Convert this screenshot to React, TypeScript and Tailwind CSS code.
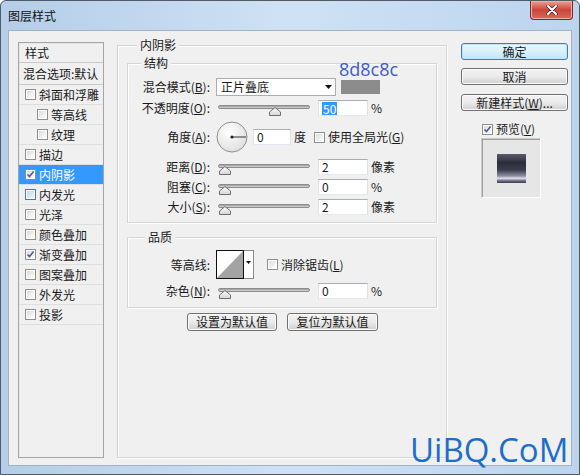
import type { ReactNode } from 'react';

const font = "font-['Noto_Sans_CJK_SC','Noto_Sans',sans-serif]";

function CheckBox({ checked = false, hot = false }: { checked?: boolean; hot?: boolean }) {
  return (
    <svg width="11" height="11" viewBox="0 0 11 11" className="shrink-0">
      <defs>
        <linearGradient id="cbg" x1="0" y1="0" x2="1" y2="1">
          <stop offset="0" stopColor="#dcdcdc" />
          <stop offset="1" stopColor="#ffffff" />
        </linearGradient>
        <linearGradient id="cbh" x1="0" y1="0" x2="1" y2="1">
          <stop offset="0" stopColor="#b9dcf5" />
          <stop offset="1" stopColor="#e8f5fd" />
        </linearGradient>
      </defs>
      <rect x="0.5" y="0.5" width="10" height="10" fill="#fff" stroke={hot ? '#3c7fb1' : '#8e8f8f'} />
      <rect x="2" y="2" width="7" height="7" fill={hot ? 'url(#cbh)' : 'url(#cbg)'} />
      {checked && <path d="M2.5 5.5 L4.5 7.6 L8.6 2.6" fill="none" stroke="#4a5f97" strokeWidth="1.6" />}
    </svg>
  );
}

function ListRow({
  children,
  indent = false,
  checked = false,
  selected = false,
  hot = false,
}: {
  children: ReactNode;
  indent?: boolean;
  checked?: boolean;
  selected?: boolean;
  hot?: boolean;
}) {
  return (
    <div
      className={`flex h-[20px] items-center gap-[3px] border-b border-[#dedede] ${indent ? 'pl-[18px]' : 'pl-[6px]'} ${
        selected ? 'bg-[#3399ff] text-white' : ''
      }`}
    >
      <CheckBox checked={checked} hot={hot} />
      <span>{children}</span>
    </div>
  );
}

function WinButton({ children, primary = false, className = '' }: { children: ReactNode; primary?: boolean; className?: string }) {
  return (
    <div
      className={`flex h-[17px] items-center justify-center rounded-[3px] border leading-none ${
        primary
          ? 'border-[#3c7fb1] bg-gradient-to-b from-[#eaf6fd] via-[#d9f0fc] to-[#bee6fd] shadow-[inset_0_0_0_1px_#bfe3f8]'
          : 'border-[#707070] bg-gradient-to-b from-[#f2f2f2] via-[#ebebeb] to-[#cfcfcf] shadow-[inset_0_0_0_1px_#fcfcfc]'
      } ${className}`}
    >
      {children}
    </div>
  );
}

function Label({ children }: { children: ReactNode }) {
  return <div className="w-[82px] shrink-0 whitespace-nowrap text-right">{children}</div>;
}

function Slider({ pos }: { pos: number }) {
  return (
    <div className="relative ml-[2px] h-[16px] w-[92px] shrink-0">
      <div className="absolute left-0 right-0 top-[5px] h-[4px] rounded-[2px] border border-[#8c8c8c] bg-gradient-to-b from-[#9a9a9a] to-[#d8d8d8]" />
      <svg width="12" height="9" viewBox="0 0 12 9" className="absolute top-[7px]" style={{ left: pos - 6 }}>
        <defs>
          <linearGradient id="thumb" x1="0" y1="0" x2="0" y2="1">
            <stop offset="0" stopColor="#ffffff" />
            <stop offset="1" stopColor="#d4d4d4" />
          </linearGradient>
        </defs>
        <path d="M6 0.5 L11.5 5 L11.5 8.5 L0.5 8.5 L0.5 5 Z" fill="url(#thumb)" stroke="#6e6e6e" />
      </svg>
    </div>
  );
}

function TextBox({ children, className = 'w-[50px]' }: { children: ReactNode; className?: string }) {
  return (
    <div className={`flex h-[16px] shrink-0 items-center border border-[#abadb3] border-b-[#e3e9ef] border-l-[#e2e3ea] border-r-[#dbdfe6] bg-white pl-[3px] ${className}`}>
      {children}
    </div>
  );
}

function Group({ title, titleLeft, className, children }: { title: string; titleLeft: number; className: string; children: ReactNode }) {
  return (
    <div className={`relative border border-[#d5d5d5] shadow-[1px_1px_0_#ffffff,inset_1px_1px_0_#ffffff] ${className}`}>
      <span className="absolute top-[-9px] bg-[#f0f0f0] px-[3px] leading-[16px]" style={{ left: titleLeft }}>
        {title}
      </span>
      {children}
    </div>
  );
}

function SliderRow({ label, pos, value, unit }: { label: ReactNode; pos: number; value: string; unit: string }) {
  return (
    <div className="flex h-[20px] items-center">
      <Label>{label}</Label>
      <div className="ml-[6px] flex items-center">
        <Slider pos={pos} />
        <TextBox className="ml-[8px] w-[50px]">{value}</TextBox>
        <span className="ml-[3px]">{unit}</span>
      </div>
    </div>
  );
}

export default function App() {
  return (
    <div className={`h-[475px] w-[580px] overflow-hidden bg-white text-[12px] text-[#1a1a1a] ${font}`}>
      <div className="relative flex h-full w-full flex-col rounded-t-[6px] border border-[#4f5b68] bg-gradient-to-r from-[#b5cde8] via-[#cfe2f5] to-[#bcd4ee]">
        {/* title bar */}
        <div className="flex h-[29px] shrink-0 items-center pl-[7px] text-[12px] text-[#111]">图层样式</div>
        <div className="absolute right-[6px] top-0 flex h-[19px] w-[43px] items-center justify-center rounded-b-[4px] border border-t-0 border-[#7a2a22] bg-gradient-to-b from-[#e8a093] via-[#c9463a] to-[#d86a5c] shadow-[inset_0_0_0_1px_#eab3aa]">
          <svg width="12" height="10" viewBox="0 0 12 10">
            <path d="M2 1 L10 9 M10 1 L2 9" stroke="#3b1410" strokeWidth="3.2" strokeLinecap="round" />
            <path d="M2 1 L10 9 M10 1 L2 9" stroke="#ffffff" strokeWidth="2" strokeLinecap="round" />
          </svg>
        </div>

        {/* dialog body */}
        <div className="mx-[7px] mb-[8px] flex flex-1 items-start border border-[#9fb2c6] bg-[#f0f0f0] pl-[9px] pt-[11px]">
          {/* styles list */}
          <div className="h-[416px] w-[86px] shrink-0 border border-[#a5a5a5] shadow-[inset_1px_1px_0_#e8e8e8]">
            <div className="flex h-[20px] items-center border-b border-[#c9c9c9] pl-[6px]">样式</div>
            <div className="flex h-[22px] items-center border-b border-[#c9c9c9] pl-[4px] whitespace-nowrap">混合选项:默认</div>
            <ListRow>斜面和浮雕</ListRow>
            <ListRow indent>等高线</ListRow>
            <ListRow indent>纹理</ListRow>
            <ListRow>描边</ListRow>
            <ListRow checked selected>
              内阴影
            </ListRow>
            <ListRow hot>内发光</ListRow>
            <ListRow>光泽</ListRow>
            <ListRow>颜色叠加</ListRow>
            <ListRow checked>渐变叠加</ListRow>
            <ListRow>图案叠加</ListRow>
            <ListRow>外发光</ListRow>
            <ListRow>投影</ListRow>
          </div>

          {/* settings */}
          <Group title="内阴影" titleLeft={19} className="ml-[13px] mt-[3px] h-[413px] w-[330px] shrink-0 pl-[9px] pt-[17px]">
            <Group title="结构" titleLeft={13} className="h-[160px] w-[310px] pt-[13px]">
              <span className="absolute left-[211px] top-[-3px] font-['Open_Sans',sans-serif] text-[18px] leading-[17px] text-[#3b5cc9]">
                8d8c8c
              </span>
              <div className="flex h-[20px] items-center">
                <Label>
                  混合模式(<u>B</u>):
                </Label>
                <div className="ml-[6px] flex h-[18px] w-[120px] items-center justify-between border border-[#abadb3] bg-white pl-[4px] pr-[3px]">
                  <span>正片叠底</span>
                  <svg width="7" height="4" viewBox="0 0 7 4">
                    <path d="M0 0 L7 0 L3.5 4 Z" fill="#111" />
                  </svg>
                </div>
                <div className="ml-[5px] h-[14px] w-[39px] bg-[#8d8c8c]" />
              </div>
              <div className="mt-[1px] flex h-[20px] items-center">
                <Label>
                  不透明度(<u>O</u>):
                </Label>
                <div className="ml-[6px] flex items-center">
                  <Slider pos={57} />
                  <TextBox className="ml-[8px] w-[50px]">
                    <span className="bg-[#3399ff] px-[1px] leading-[13px] text-white">50</span>
                  </TextBox>
                  <span className="ml-[3px]">%</span>
                </div>
              </div>
              <div className="mt-[3px] flex h-[32px] items-center">
                <Label>
                  角度(<u>A</u>):
                </Label>
                <div className="ml-[6px] flex items-center">
                  <svg width="32" height="32" viewBox="0 0 32 32" className="shrink-0">
                    <defs>
                      <radialGradient id="dial" cx="0.4" cy="0.35" r="0.7">
                        <stop offset="0" stopColor="#ffffff" />
                        <stop offset="1" stopColor="#dedede" />
                      </radialGradient>
                    </defs>
                    <circle cx="16" cy="16" r="15" fill="url(#dial)" stroke="#8f8f8f" />
                    <line x1="16" y1="16" x2="30" y2="16" stroke="#333" strokeWidth="1" />
                    <circle cx="16" cy="16" r="1.6" fill="#222" />
                  </svg>
                  <TextBox className="ml-[5px] w-[38px]">0</TextBox>
                  <span className="ml-[3px]">度</span>
                  <span className="ml-[8px]">
                    <CheckBox />
                  </span>
                  <span className="ml-[3px] whitespace-nowrap">
                    使用全局光(<u>G</u>)
                  </span>
                </div>
              </div>
              <div className="mt-[4px]">
                <SliderRow label={<>距离(<u>D</u>):</>} pos={7} value="2" unit="像素" />
                <SliderRow label={<>阻塞(<u>C</u>):</>} pos={7} value="0" unit="%" />
                <SliderRow label={<>大小(<u>S</u>):</>} pos={7} value="2" unit="像素" />
              </div>
            </Group>

            <Group title="品质" titleLeft={17} className="mt-[14px] h-[71px] w-[310px] pt-[12px]">
              <div className="flex h-[29px] items-center">
                <Label>等高线:</Label>
                <div className="ml-[6px] flex h-[29px] shrink-0 items-stretch">
                  <svg width="28" height="29" viewBox="0 0 28 29">
                    <rect x="0" y="0" width="28" height="29" fill="#fff" />
                    <path d="M1 28 L27 1 L27 28 Z" fill="#a3a3a3" />
                    <rect x="0.5" y="0.5" width="27" height="28" fill="none" stroke="#111" />
                  </svg>
                  <div className="flex w-[10px] items-start justify-center border border-l-0 border-[#8a8a8a] bg-white pt-[10px]">
                    <svg width="5" height="3" viewBox="0 0 5 3">
                      <path d="M0 0 L5 0 L2.5 3 Z" fill="#111" />
                    </svg>
                  </div>
                </div>
                <span className="ml-[13px]">
                  <CheckBox />
                </span>
                <span className="ml-[3px] whitespace-nowrap">
                  消除锯齿(<u>L</u>)
                </span>
              </div>
              <div className="mt-[2px]">
                <SliderRow label={<>杂色(<u>N</u>):</>} pos={7} value="0" unit="%" />
              </div>
            </Group>

            <div className="mt-[5px] flex">
              <WinButton className="ml-[60px] h-[18px] w-[90px]">设置为默认值</WinButton>
              <WinButton className="ml-[10px] h-[18px] w-[91px]">复位为默认值</WinButton>
            </div>
          </Group>

          {/* buttons column */}
          <div className="ml-[14px] mt-[1px] flex w-[107px] shrink-0 flex-col">
            <WinButton primary>确定</WinButton>
            <WinButton className="mt-[8px]">取消</WinButton>
            <WinButton className="mt-[9px]">
              新建样式(<u>W</u>)...
            </WinButton>
            <div className="ml-[21px] mt-[12px] flex h-[12px] items-center gap-[3px]">
              <CheckBox checked />
              <span>
                预览(<u>V</u>)
              </span>
            </div>
            <div className="ml-[20px] mt-[3px] flex h-[60px] w-[60px] items-center justify-center border border-[#c8c8c8] border-b-white border-r-white bg-[#e6e6e6] shadow-[inset_1px_1px_0_#a0a0a0]">
              <div className="h-[29px] w-[29px] bg-[linear-gradient(to_bottom,#5a5a6c_0%,#2c2c38_30%,#3c3c4e_55%,#8e8ea4_76%,#e0e0ea_84%,#70708a_92%,#3a3a48_100%)]" />
            </div>
          </div>
        </div>

        <span className="absolute left-[409px] top-[429px] font-['Open_Sans',sans-serif] text-[33px] leading-[40px] text-[#1d6dcb]">
          UiBQ.CoM
        </span>
      </div>
    </div>
  );
}
